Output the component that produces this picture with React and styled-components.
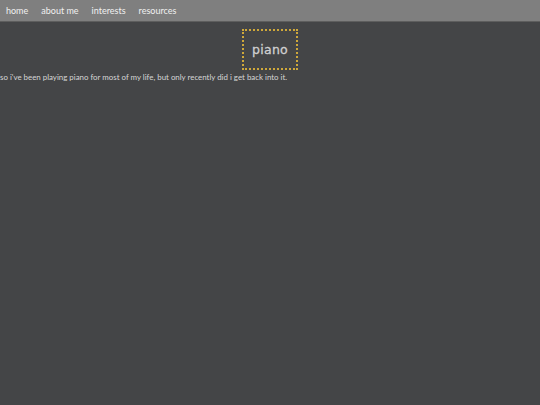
import React from "react"
import styled, { createGlobalStyle } from "styled-components"

const GlobalStyle = createGlobalStyle`
  html, body {
    margin: 0;
    padding: 0;
    background: #444547;
    min-height: 100%;
  }
  body {
    font-family: "Lato", "Open Sans", sans-serif;
  }
`

const Nav = styled.nav`
  display: flex;
  align-items: center;
  gap: 13px;
  height: 21px;
  padding: 0 6px;
  background: #7f7f7f;
  border-bottom: 1px solid #5e5e5e;
  a {
    color: #f0f0f0;
    font-size: 9px;
    text-decoration: none;
    line-height: 1;
  }
`

const Title = styled.h1`
  display: flex;
  align-items: center;
  justify-content: center;
  box-sizing: border-box;
  width: 56px;
  height: 41px;
  margin: 7px auto 0;
  border: 2px dotted #cfa83a;
  font-family: "DejaVu Sans", sans-serif;
  font-weight: normal;
  font-size: 12.5px;
  letter-spacing: 0.3px;
  color: #d0d0d0;
  -webkit-text-stroke: 0.3px #d0d0d0;
`

const Body = styled.p`
  margin: 2px 0 0;
  font-size: 7.9px;
  color: #d6d6d6;
`

export default function App() {
  return (
    <>
      <GlobalStyle />
      <Nav>
        <a href="#">home</a>
        <a href="#">about me</a>
        <a href="#">interests</a>
        <a href="#">resources</a>
      </Nav>
      <Title>piano</Title>
      <Body>
        so i've been playing piano for most of my life, but only recently did i
        get back into it.
      </Body>
    </>
  )
}
